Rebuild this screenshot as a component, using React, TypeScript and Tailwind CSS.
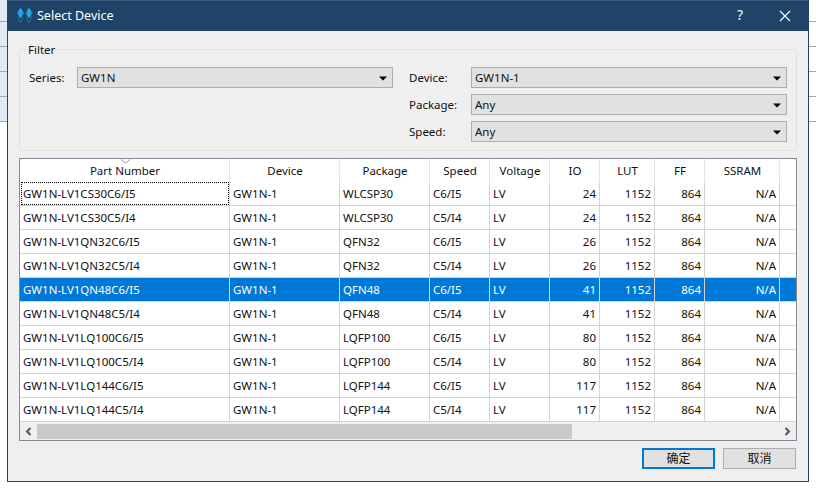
const cols = [
  { name: "Part Number", w: "w-[210px]" },
  { name: "Device", w: "w-[110px]" },
  { name: "Package", w: "w-[90px]" },
  { name: "Speed", w: "w-[60px]" },
  { name: "Voltage", w: "w-[60px]" },
  { name: "IO", w: "w-[50px]" },
  { name: "LUT", w: "w-[55px]" },
  { name: "FF", w: "w-[50px]" },
  { name: "SSRAM", w: "w-[75px]" },
];

const rows = [
  ["GW1N-LV1CS30C6/I5", "WLCSP30", "C6/I5", "24"],
  ["GW1N-LV1CS30C5/I4", "WLCSP30", "C5/I4", "24"],
  ["GW1N-LV1QN32C6/I5", "QFN32", "C6/I5", "26"],
  ["GW1N-LV1QN32C5/I4", "QFN32", "C5/I4", "26"],
  ["GW1N-LV1QN48C6/I5", "QFN48", "C6/I5", "41"],
  ["GW1N-LV1QN48C5/I4", "QFN48", "C5/I4", "41"],
  ["GW1N-LV1LQ100C6/I5", "LQFP100", "C6/I5", "80"],
  ["GW1N-LV1LQ100C5/I4", "LQFP100", "C5/I4", "80"],
  ["GW1N-LV1LQ144C6/I5", "LQFP144", "C6/I5", "117"],
  ["GW1N-LV1LQ144C5/I4", "LQFP144", "C5/I4", "117"],
];

function Arrow() {
  return (
    <svg width="8" height="5" viewBox="0 0 8 5" className="shrink-0">
      <path d="M0 0.500H8L4 4.500Z" fill="#000" />
    </svg>
  );
}

function Combo({ value, className }: { value: string; className: string }) {
  return (
    <div className={`h-[21px] flex items-center justify-between pl-[3px] pr-[5px] pt-[1px] bg-[#e1e1e1] border border-[#adadad] ${className}`}>
      <span>{value}</span>
      <Arrow />
    </div>
  );
}

function Field({ label, value }: { label: string; value: string }) {
  return (
    <div className="flex items-center h-[21px]">
      <span className="w-[62px]">{label}</span>
      <Combo value={value} className="w-[316px]" />
    </div>
  );
}

function Strip({ className }: { className: string }) {
  return (
    <div className={`shrink-0 flex flex-col ${className}`}>
      {[0, 1, 2, 3, 4].map((i) => (
        <div key={i} className={`border-b border-[#a8a8a8] ${i === 0 ? "h-[22px]" : "h-[25px]"}`} />
      ))}
    </div>
  );
}

function Row({ row, index }: { row: string[]; index: number }) {
  const selected = index === 4;
  const cells = [row[0], "GW1N-1", row[1], row[2], "LV", row[3], "1152", "864", "N/A"];
  return (
    <div className={`flex h-[24px] ${selected ? "bg-[#0078d7] text-white" : ""}`}>
      {cells.map((cell, i) => (
        <div
          key={i}
          className={`${cols[i].w} shrink-0 flex items-center px-[3px] border-r border-b border-[#d4d4d4] ${i >= 5 ? "justify-end" : ""} relative`}
        >
          {cell}
          {i === 0 && index === 0 && (
            <div className="absolute left-[1px] right-0 top-0 bottom-0 border border-dotted border-black" />
          )}
        </div>
      ))}
      <div className="flex-1 border-b border-[#d4d4d4]" />
    </div>
  );
}

export default function App() {
  return (
    <div className="w-[816px] h-[489px] flex overflow-hidden bg-white text-[11.5px] leading-none text-[#111] font-['Noto_Sans','Noto_Sans_CJK_SC',sans-serif]">
      <Strip className="w-[7px] h-[122px] bg-[#dfe8f3]" />
      <div className="w-[802px] h-[482px] shrink-0 flex flex-col bg-[#efefef] border-x border-b border-[#244465]">
        <div className="h-[31px] shrink-0 flex items-center bg-[#204368] text-white border-t border-[#3a5a7c]">
          <svg width="18" height="18" viewBox="0 0 18 18" className="ml-[8px]">
            <path d="M4.500 0.500L8.200 6L4.500 11.500L0.800 6Z" fill="#1b8fd0" />
            <path d="M13 0.500L16.700 6L13 11.500L9.300 6Z" fill="#1b8fd0" />
            <path d="M4.500 2L4.500 10M13 2L13 10" stroke="#2ab4ee" strokeWidth="2" />
            <path d="M1.500 9.500L4.500 16L7.500 9.500M10 9.500L13 16L16 9.500" fill="none" stroke="#2a6a96" />
          </svg>
          <span className="ml-[3px] text-[12.5px]">Select Device</span>
          <span className="ml-auto mr-[36px] text-[14px] mt-[-2px]">?</span>
          <svg width="12" height="12" viewBox="0 0 12 12" className="mr-[17px]">
            <path d="M1 1L11 11M11 1L1 11" stroke="#fff" strokeWidth="1.1" />
          </svg>
        </div>

        <div className="flex-1 flex flex-col pt-[18px] px-[11px]">
          <div className="relative h-[102px] w-[778px] border border-[#e0e0e0] flex pt-[17px] pl-[9px]">
            <span className="absolute left-[6px] top-[-6px] bg-[#efefef] px-[2px]">Filter</span>
            <div className="flex items-start">
              <span className="w-[48px] h-[21px] flex items-center">Series:</span>
              <Combo value="GW1N" className="w-[316px]" />
            </div>
            <div className="ml-[16px] flex flex-col gap-[6px]">
              <Field label="Device:" value="GW1N-1" />
              <Field label="Package:" value="Any" />
              <Field label="Speed:" value="Any" />
            </div>
          </div>

          <div className="mt-[7px] w-[778px] h-[283px] flex flex-col bg-white border border-[#7f8c97]">
            <div className="flex h-[23px] shrink-0">
              {cols.map((c, i) => (
                <div key={c.name} className={`${c.w} shrink-0 relative flex items-center justify-center pl-[1px] border-r border-[#e6e6e6]`}>
                  {i === 0 && (
                    <svg width="9" height="5" viewBox="0 0 9 5" className="absolute top-0 left-[101px]">
                      <path d="M0 0.500L4.500 4L9 0.500" fill="none" stroke="#9a9a9a" />
                    </svg>
                  )}
                  {c.name}
                </div>
              ))}
            </div>
            {rows.map((r, i) => (
              <Row key={r[0]} row={r} index={i} />
            ))}
            <div className="flex-1 flex items-start pt-[2px] bg-[#efefef]">
              <div className="w-[17px] h-[15px] flex items-center justify-center">
                <svg width="7" height="9" viewBox="0 0 7 9"><path d="M5.500 1L2 4.500L5.500 8" fill="none" stroke="#555" strokeWidth="2" /></svg>
              </div>
              <div className="w-[535px] h-[15px] bg-[#c9c9c9]" />
              <div className="ml-auto w-[17px] h-[15px] flex items-center justify-center">
                <svg width="7" height="9" viewBox="0 0 7 9"><path d="M1.500 1L5 4.500L1.500 8" fill="none" stroke="#555" strokeWidth="2" /></svg>
              </div>
            </div>
          </div>

          <div className="flex justify-end gap-[8px] mt-[7px] w-[777px]">
            <button className="w-[73px] h-[21px] bg-[#e1e1e1] border-2 border-[#0078d7] text-[12px]">确定</button>
            <button className="w-[73px] h-[21px] bg-[#e1e1e1] border border-[#adadad] text-[12px]">取消</button>
          </div>
        </div>
      </div>
      <Strip className="flex-1 h-[122px]" />
    </div>
  );
}
